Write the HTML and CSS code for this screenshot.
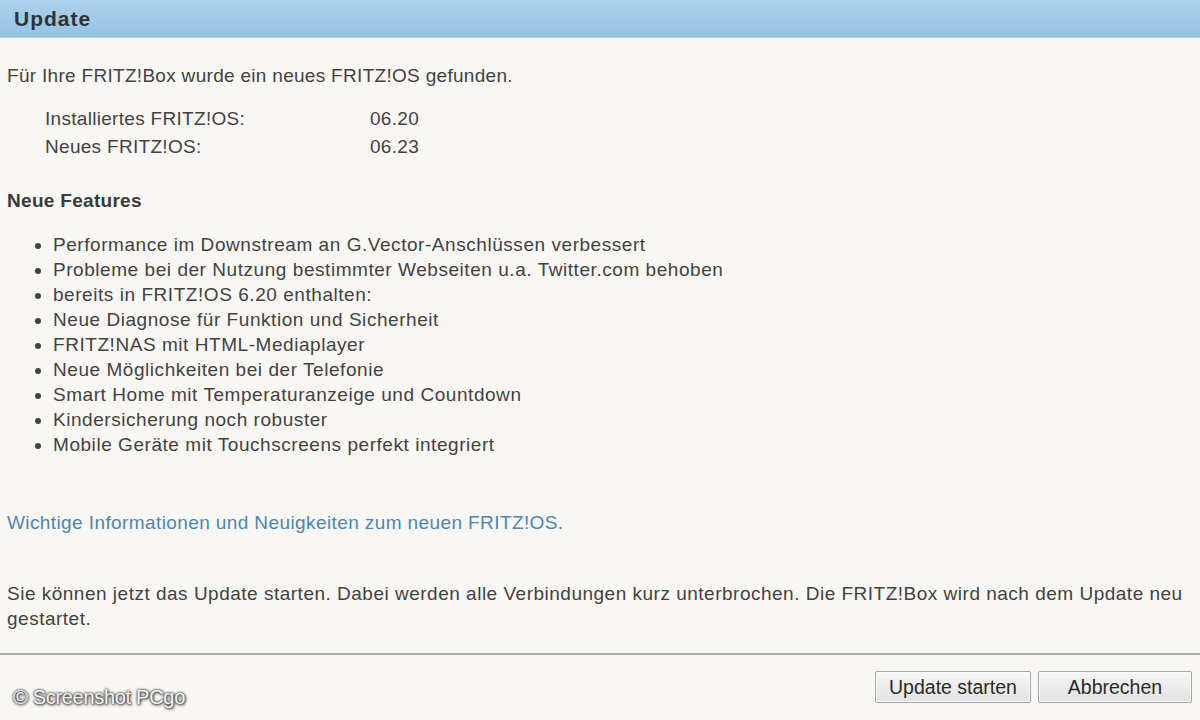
FILE: index.html
```html
<!DOCTYPE html>
<html lang="de">
<head>
<meta charset="utf-8">
<title>Update</title>
<link rel="stylesheet" href="styles.css">
</head>
<body>
<div class="page">
  <header class="titlebar"><h1>Update</h1></header>
  <main class="content">
    <p class="intro">Für Ihre FRITZ!Box wurde ein neues FRITZ!OS gefunden.</p>
    <div class="versions">
      <div class="vrow"><span class="vlabel">Installiertes FRITZ!OS:</span><span class="vval">06.20</span></div>
      <div class="vrow"><span class="vlabel">Neues FRITZ!OS:</span><span class="vval">06.23</span></div>
    </div>
    <h2 class="features-title">Neue Features</h2>
    <ul class="features">
      <li>Performance im Downstream an G.Vector-Anschlüssen verbessert</li>
      <li>Probleme bei der Nutzung bestimmter Webseiten u.a. Twitter.com behoben</li>
      <li>bereits in FRITZ!OS 6.20 enthalten:</li>
      <li>Neue Diagnose für Funktion und Sicherheit</li>
      <li>FRITZ!NAS mit HTML-Mediaplayer</li>
      <li>Neue Möglichkeiten bei der Telefonie</li>
      <li>Smart Home mit Temperaturanzeige und Countdown</li>
      <li>Kindersicherung noch robuster</li>
      <li>Mobile Geräte mit Touchscreens perfekt integriert</li>
    </ul>
    <a class="info-link" href="#">Wichtige Informationen und Neuigkeiten zum neuen FRITZ!OS.</a>
    <p class="notice">Sie können jetzt das Update starten. Dabei werden alle Verbindungen kurz unterbrochen. Die FRITZ!Box wird nach dem Update neu gestartet.</p>
  </main>
  <footer class="footer">
    <div class="buttons">
      <button class="btn btn-update">Update starten</button>
      <button class="btn btn-cancel">Abbrechen</button>
    </div>
    <span class="watermark">© Screenshot PCgo</span>
  </footer>
</div>
</body>
</html>
```

FILE: styles.css
```css
html, body {
  margin: 0;
  padding: 0;
}
body {
  width: 1200px;
  height: 720px;
  overflow: hidden;
  background: #f9f7f3;
  font-family: "Liberation Sans", Arial, sans-serif;
  color: #424242;
}
.page {
  display: flex;
  flex-direction: column;
  height: 720px;
}
.titlebar {
  height: 37px;
  flex: none;
  background: linear-gradient(to bottom, #acd0ec 0%, #9ec9e6 60%, #96c2e2 100%);
  border-bottom: 1px solid #b9d3e6;
  display: flex;
  align-items: center;
  padding-left: 14px;
}
.titlebar h1 {
  margin: 0;
  font-size: 21px;
  letter-spacing: 1px;
  font-weight: bold;
  color: #2e3338;
  padding-top: 1px;
}
.content {
  padding: 0 12px 0 7px;
  font-size: 19px;
  letter-spacing: 0.3px;
  flex: 1;
}
.intro {
  margin: 27px 0 0 0;
  line-height: 22px;
}
.versions {
  margin-top: 17px;
  padding-left: 38px;
}
.vrow {
  display: flex;
  height: 29px;
  line-height: 29px;
}
.vrow:first-child {
  height: 28px;
}
.vlabel {
  width: 325px;
}
.features-title {
  margin: 29px 0 0 0;
  font-size: 19px;
  font-weight: bold;
  line-height: 22px;
  color: #3a3a3a;
}
.features {
  margin: 20px 0 0 0;
  padding-left: 46px;
  line-height: 25px;
  letter-spacing: 0.55px;
}
.info-link {
  display: block;
  margin-top: 55px;
  color: #4c86b3;
  text-decoration: none;
  line-height: 22px;
  letter-spacing: 0.4px;
}
.notice {
  margin: 47px 0 0 0;
  line-height: 25px;
  letter-spacing: 0.5px;
}
.footer {
  flex: none;
  border-top: 2px solid #a9adab;
  height: 67px;
  position: relative;
  box-sizing: border-box;
}
.buttons {
  display: flex;
  justify-content: flex-end;
  gap: 7px;
  padding: 16px 8px 0 0;
}
.btn {
  font-family: "Liberation Sans", Arial, sans-serif;
  font-size: 19.5px;
  color: #2a2a2a;
  height: 32px;
  background: linear-gradient(to bottom, #f7f7f7 0%, #ececec 50%, #e2e2e2 100%);
  border: 1px solid #a5a5a5;
  border-radius: 2px;
  padding: 0;
  box-shadow: inset 0 0 0 1px #fbfbfb;
}
.btn-update {
  width: 156px;
}
.btn-cancel {
  width: 154px;
}
.watermark {
  position: absolute;
  left: 13px;
  top: 31px;
  font-size: 20px;
  color: #f4f4f4;
  letter-spacing: -0.3px;
  text-shadow: 0 0 2px #444, 0 0 3px #555, 1px 1px 3px #333;
}
```
